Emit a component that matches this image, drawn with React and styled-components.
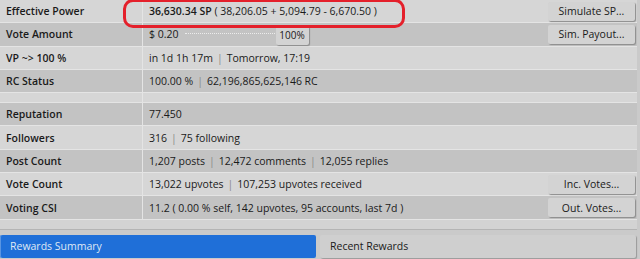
import styled, { createGlobalStyle } from 'styled-components';

const Global = createGlobalStyle`
  html, body { margin: 0; padding: 0; }
  body {
    background: #cacaca;
    font-family: "Open Sans", "Noto Sans", sans-serif;
    font-size: 10px;
    color: #1a1a1a;
    width: 640px;
    height: 259px;
    overflow: hidden;
  }
`;

const Page = styled.div`
  position: relative;
  width: 640px;
`;

const Table = styled.div`
  width: 637px;
  display: flex;
  flex-direction: column;
`;

const Row = styled.div`
  display: flex;
  height: 23.3px;
  box-sizing: border-box;
  border-bottom: 1px solid #e4e4e4;
  background: ${p => (p.$dark ? '#c3c3c3' : '#d6d6d6')};
`;

const Spacer = styled.div`
  height: 10px;
  box-sizing: border-box;
  background: #d6d6d6;
  border-bottom: 1px solid #e4e4e4;
  display: flex;
`;

const Label = styled.div`
  width: 143px;
  flex: none;
  box-sizing: border-box;
  border-right: 1px solid #e4e4e4;
  padding-left: 6px;
  display: flex;
  align-items: center;
  font-weight: 600;
  font-size: 10.5px;
`;

const Value = styled.div`
  flex: 1;
  display: flex;
  align-items: center;
  padding-left: 6px;
  padding-right: 2px;
  font-size: 10.5px;
  white-space: nowrap;
  position: relative;
`;

const Strong = styled.span`
  font-weight: 600;
`;

const Pipe = styled.span`
  color: #8a8a8a;
  margin: 0 4px;
`;

const Button = styled.button`
  margin-left: auto;
  width: 87px;
  height: 19px;
  padding: 0;
  border: none;
  border-radius: 2px;
  background: #d3d3d3;
  box-shadow: 1px 1px 1px #8c8c8c;
  font-family: inherit;
  font-size: 10.5px;
  color: #1a1a1a;
`;

const Slider = styled.div`
  margin-left: 2px;
  width: 128px;
  height: 100%;
  display: flex;
  align-items: center;
  justify-content: flex-end;
  position: relative;
  &::before {
    content: '';
    position: absolute;
    left: 4px;
    right: 20px;
    top: 45%;
    border-top: 1px dotted #ececec;
  }
`;

const Thumb = styled.div`
  position: relative;
  width: 33px;
  height: 19px;
  margin-top: 2px;
  box-sizing: border-box;
  background: #d3d3d3;
  box-shadow: 1px 1px 1px #8c8c8c;
  border-radius: 2px;
  display: flex;
  align-items: center;
  justify-content: center;
  font-size: 10px;
`;

const Footer = styled.div`
  height: 9px;
  width: 637px;
  background: #d3d3d3;
  border-bottom: 1px solid #b4b4b4;
`;

const Tabs = styled.div`
  display: grid;
  grid-template-columns: 316px 316px;
  gap: 4px;
  margin-top: 5px;
  height: 23px;
`;

const Tab = styled.div`
  display: flex;
  align-items: center;
  padding-left: 10px;
  font-size: 10.5px;
  border-radius: 2px;
  background: ${p => (p.$active ? '#1f6fd8' : '#cfcfcf')};
  color: ${p => (p.$active ? '#dfe8f4' : '#1a1a1a')};
  box-shadow: ${p => (p.$active ? 'inset 1px 0 0 #5a95e2' : '1px 1px 1px #9a9a9a')};
`;

const Highlight = styled.div`
  position: absolute;
  left: 123px;
  top: -1px;
  width: 282px;
  height: 29px;
  box-sizing: border-box;
  border: 3px solid #e4202b;
  border-radius: 10px;
  pointer-events: none;
`;

const join = parts =>
  parts.map((p, i) => (
    <span key={i}>
      {i > 0 && <Pipe>|</Pipe>}
      {p}
    </span>
  ));

const top = [
  {
    label: 'Effective Power',
    value: (
      <>
        <Strong>36,630.34 SP</Strong>&nbsp;( 38,206.05 + 5,094.79 - 6,670.50 )
      </>
    ),
    button: 'Simulate SP...',
  },
  {
    label: 'Vote Amount',
    value: (
      <>
        $ 0.20
        <Slider>
          <Thumb>100%</Thumb>
        </Slider>
      </>
    ),
    button: 'Sim. Payout...',
    dark: true,
  },
  { label: 'VP ~> 100 %', value: join(['in 1d 1h 17m', 'Tomorrow, 17:19']) },
  { label: 'RC Status', value: join(['100.00 %', '62,196,865,625,146 RC']), dark: true },
];

const bottom = [
  { label: 'Reputation', value: '77.450', dark: true },
  { label: 'Followers', value: join(['316', '75 following']) },
  { label: 'Post Count', value: join(['1,207 posts', '12,472 comments', '12,055 replies']), dark: true },
  { label: 'Vote Count', value: join(['13,022 upvotes', '107,253 upvotes received']), button: 'Inc. Votes...' },
  {
    label: 'Voting CSI',
    value: '11.2 ( 0.00 % self, 142 upvotes, 95 accounts, last 7d )',
    button: 'Out. Votes...',
    dark: true,
  },
];

const renderRow = r => (
  <Row key={r.label} $dark={r.dark}>
    <Label>{r.label}</Label>
    <Value>
      {r.value}
      {r.button && <Button>{r.button}</Button>}
    </Value>
  </Row>
);

export default function App() {
  return (
    <Page>
      <Global />
      <Table>
        {top.map(renderRow)}
        <Spacer>
          <Label />
        </Spacer>
        {bottom.map(renderRow)}
      </Table>
      <Footer />
      <Tabs>
        <Tab $active>Rewards Summary</Tab>
        <Tab>Recent Rewards</Tab>
      </Tabs>
      <Highlight />
    </Page>
  );
}
